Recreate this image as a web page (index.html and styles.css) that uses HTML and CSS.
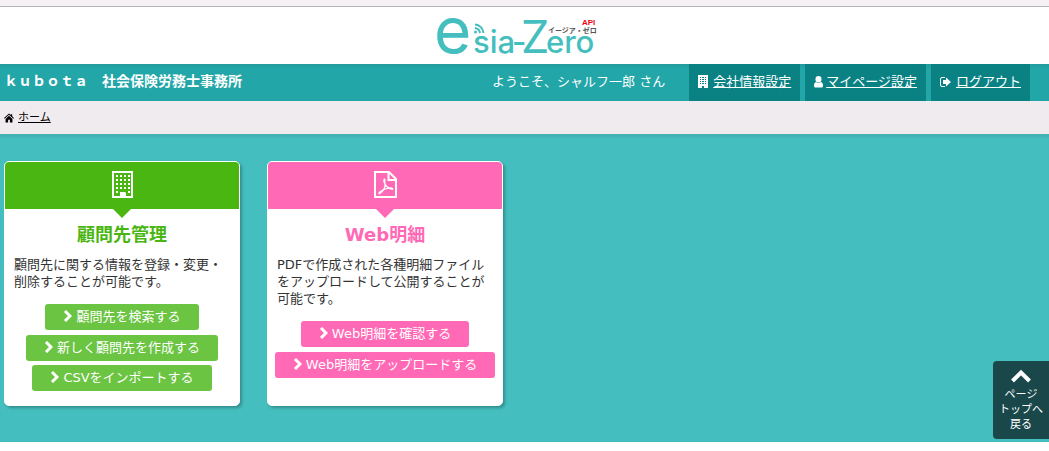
FILE: index.html
```html
<!DOCTYPE html>
<html lang="ja">
<head>
    <meta charset="UTF-8">
    <meta name="viewport" content="width=device-width, initial-scale=1.0">
    <title>esia-Zero</title>
    <link rel="stylesheet" href="styles.css">
</head>
<body>

    <header class="header">
        <a class="logo" href="#">
            <svg width="160" height="57" viewBox="0 0 160 57" role="img" aria-label="esia-Zero">
                <g class="logo-word">
                    <text class="logo-e" x="-3" y="46">e</text>
                    <text class="logo-small" x="36" y="46">sia</text>
                    <text class="logo-small" x="75" y="46">-</text>
                    <text class="logo-z" x="84" y="46">Z</text>
                    <text class="logo-small" x="109" y="46">ero</text>
                </g>
                <g class="logo-wave">
                    <path d="M38 21a6 6 0 0 1 5 5M38 17.500a9 9 0 0 1 8.500 8.500"/>
                    <circle cx="38.500" cy="25" r="1.500"/>
                </g>
                <text class="logo-kana" x="111" y="26">イージア・ゼロ</text>
                <text class="logo-api" x="145" y="18">API</text>
            </svg>
        </a>
    </header>

    <div class="userbar">
        <h1 class="office">ｋｕｂｏｔａ　社会保険労務士事務所</h1>
        <p class="welcome">ようこそ、シャルフ一郎 さん</p>
        <nav class="menu">
            <a href="#">
                <svg width="10" height="13" viewBox="0 0 10 13"><path fill="currentColor" fill-rule="evenodd" d="M0 0h10v13H6v-2H4v2H0zM2 2v1h1V2zM4 2v1h2V2zM7 2v1h1V2zM2 4v1h1V4zM4 4v1h2V4zM7 4v1h1V4zM2 6v1h1V6zM4 6v1h2V6zM7 6v1h1V6zM2 8v1h1V8zM4 8v1h2V8zM7 8v1h1V8z"/></svg>
                <span>会社情報設定</span>
            </a>
            <a href="#">
                <svg width="9" height="12" viewBox="0 0 9 12"><path fill="currentColor" d="M4.500 0a2.800 3 0 0 1 0 6.500a2.800 3 0 0 1 0-6.500zM2 6q2.500 2 5 0q2 .5 2 4q0 1.500-1.500 1.500h-6q-1.500 0-1.500-1.500q0-3.500 2-4z"/></svg>
                <span>マイページ設定</span>
            </a>
            <a href="#">
                <svg width="11" height="10" viewBox="0 0 11 10"><path fill="none" stroke="currentColor" d="M5 .5H2Q.5.5.5 2v6Q.5 9.500 2 9.500h3"/><path fill="currentColor" d="M3 3h3V.5L11 5L6 9.500V7H3z"/></svg>
                <span>ログアウト</span>
            </a>
        </nav>
    </div>

    <nav class="breadcrumb">
        <svg width="10" height="10" viewBox="0 0 11 10"><path fill="currentColor" d="M5.500 0L7.500 1.800V.8H9v2.300L11 5l-.7.8L5.500 1.500L.7 5.800L0 5zM5.500 2.500L9.300 6v4H6.500V7h-2v3H1.700V6z"/></svg>
        <a href="#">ホーム</a>
    </nav>

    <main class="main">
        <section class="card card-green">
            <div class="card-head">
                <svg width="21" height="27" viewBox="0 0 21 27">
                    <path fill="none" stroke="#fff" stroke-width="2" d="M1 1h19v25H1z"/>
                    <path fill="none" stroke="#fff" stroke-width="2" stroke-dasharray="2 2" d="M4 5h14M4 9h14M4 13h14M4 17h14M4 21h3M16 21h2"/>
                    <path fill="#fff" d="M8 21h5l1 1v4H8z"/>
                </svg>
            </div>
            <h2>顧問先管理</h2>
            <p>顧問先に関する情報を登録・変更・削除することが可能です。</p>
            <div class="actions">
                <a class="btn" href="#"><svg width="9" height="12" viewBox="0 0 9 12"><path d="M2 1l5 5l-5 5"/></svg>顧問先を検索する</a>
                <a class="btn" href="#"><svg width="9" height="12" viewBox="0 0 9 12"><path d="M2 1l5 5l-5 5"/></svg>新しく顧問先を作成する</a>
                <a class="btn" href="#"><svg width="9" height="12" viewBox="0 0 9 12"><path d="M2 1l5 5l-5 5"/></svg>CSVをインポートする</a>
            </div>
        </section>

        <section class="card card-pink">
            <div class="card-head">
                <svg width="23" height="27" viewBox="0 0 23 27">
                    <path fill="none" stroke="#fff" stroke-width="2" d="M1 1h14l7 7v18H1zM14.500 1v8H22"/>
                    <path fill="none" stroke="#fff" stroke-width="1.300" d="M11 8q-2 0-.5 4t6 6q3 1 2-.5t-7 .5t-6.500 4t3-1.500t3-7t0-5.500"/>
                </svg>
            </div>
            <h2>Web明細</h2>
            <p>PDFで作成された各種明細ファイルをアップロードして公開することが可能です。</p>
            <div class="actions">
                <a class="btn" href="#"><svg width="9" height="12" viewBox="0 0 9 12"><path d="M2 1l5 5l-5 5"/></svg>Web明細を確認する</a>
                <a class="btn" href="#"><svg width="9" height="12" viewBox="0 0 9 12"><path d="M2 1l5 5l-5 5"/></svg>Web明細をアップロードする</a>
            </div>
        </section>
    </main>

    <a class="pagetop" href="#">
        <svg width="20" height="14" viewBox="0 0 20 14"><path fill="none" stroke="#fff" stroke-width="4" d="M1.500 12L10 3.500L18.500 12"/></svg>
        ページ<br>トップへ<br>戻る
    </a>

</body>
</html>
```
FILE: styles.css
```css
* {
    box-sizing: border-box;
}
body {
    margin: 0;
    background-color: #fff;
    color: #333;
    font-family: "DejaVu Sans", "Noto Sans CJK JP", sans-serif;
    font-size: 13px;
    line-height: 17px;
}
h1, h2, p {
    margin: 0;
}
svg {
    flex: none;
}
.header {
    display: flex;
    justify-content: center;
    padding: 1px 15px 0 0;
    border-top: 6px solid #f5f1f5;
    box-shadow: inset 0 1px #b4b4b4;
}
.logo {
    display: block;
    height: 57px;
}
.logo svg {
    overflow: visible;
}
.logo-word {
    fill: #44bebe;
    font-family: "Inter", sans-serif;
    font-weight: 500;
}
.logo-e {
    font-size: 64px;
    font-weight: 400;
}
.logo-small {
    font-size: 31px;
}
.logo-z {
    font-size: 45px;
    font-weight: 400;
}
.logo-wave {
    fill: #44bebe;
}
.logo-wave path {
    fill: none;
    stroke: #44bebe;
    stroke-width: 2;
}
.logo-kana {
    fill: #555;
    font-size: 7px;
    font-weight: bold;
}
.logo-api {
    fill: #f00014;
    font-family: "Liberation Sans", sans-serif;
    font-size: 8px;
    font-weight: bold;
}

/* user bar */
.userbar {
    display: flex;
    align-items: center;
    height: 37px;
    padding: 0 19px 0 4px;
    background-color: #22a6a8;
    box-shadow: inset 0 4px 2px -1px #229c9e;
    color: #fff;
}
.office {
    flex: 1;
    padding-bottom: 2px;
    font-size: 14px;
}
.welcome {
    margin-right: 24px;
    padding-bottom: 2px;
}
.menu {
    display: flex;
    gap: 5px;
    height: 100%;
}
.menu a {
    display: flex;
    align-items: center;
    gap: 5px;
    padding: 0 9px 2px;
    background-color: #0a8284;
    color: #fff;
    text-decoration: none;
}
.menu a:nth-child(2) {
    gap: 3px;
}
.menu span {
    text-decoration: underline;
}

.breadcrumb {
    display: flex;
    align-items: center;
    gap: 4px;
    height: 33px;
    padding-left: 4px;
    background-color: #efebee;
    color: #000;
    font-size: 11px;
}
.breadcrumb a {
    color: #000;
}

/* cards */
.main {
    display: flex;
    flex-wrap: wrap;
    gap: 27px;
    padding: 27px 4px 36px;
    background-color: #44bebe;
    box-shadow: inset 0 4px 2px -1px #44b2b3;
}
.card {
    width: 236px;
    padding-bottom: 14px;
    border: 1px solid #fff;
    border-radius: 5px;
    background-color: #fff;
    box-shadow: 2px 2px 3px rgba(0, 0, 0, 0.25);
}
.card-green {
    --head: #4ab612;
    --btn: #6bc442;
}
.card-pink {
    --head: #ff69b5;
    --btn: #ff69b5;
}
.card-head {
    position: relative;
    display: flex;
    justify-content: center;
    height: 47px;
    padding-top: 9px;
    border-radius: 4px 4px 0 0;
    background-color: var(--head);
}
.card-head::after {
    content: '';
    position: absolute;
    top: 100%;
    left: 50%;
    transform: translateX(-50%);
    border: 9px solid transparent;
    border-top-color: var(--head);
    border-bottom: 0;
}
.card h2 {
    padding-top: 14px;
    color: var(--head);
    font-size: 18px;
    line-height: 24px;
    text-align: center;
}
.card p {
    padding: 9px 9px 14px;
}
.actions {
    display: flex;
    flex-direction: column;
    align-items: center;
    gap: 4px;
}
.btn {
    display: flex;
    align-items: center;
    gap: 4px;
    height: 26px;
    padding: 0 18px 2px;
    border-radius: 3px;
    background-color: var(--btn);
    color: #fff;
    text-decoration: none;
    white-space: nowrap;
}
.btn:first-child {
    margin-bottom: 1px;
}
.btn path {
    fill: none;
    stroke: #fff;
    stroke-width: 3;
}

.pagetop {
    position: fixed;
    right: 0;
    bottom: 12px;
    width: 56px;
    padding: 8px 0 7px;
    border-radius: 4px 0 0 4px;
    background-color: #19474a;
    color: #fff;
    font-size: 11px;
    line-height: 15px;
    text-align: center;
    text-decoration: none;
}
.pagetop svg {
    display: block;
    margin: 0 auto 4px;
}
```
